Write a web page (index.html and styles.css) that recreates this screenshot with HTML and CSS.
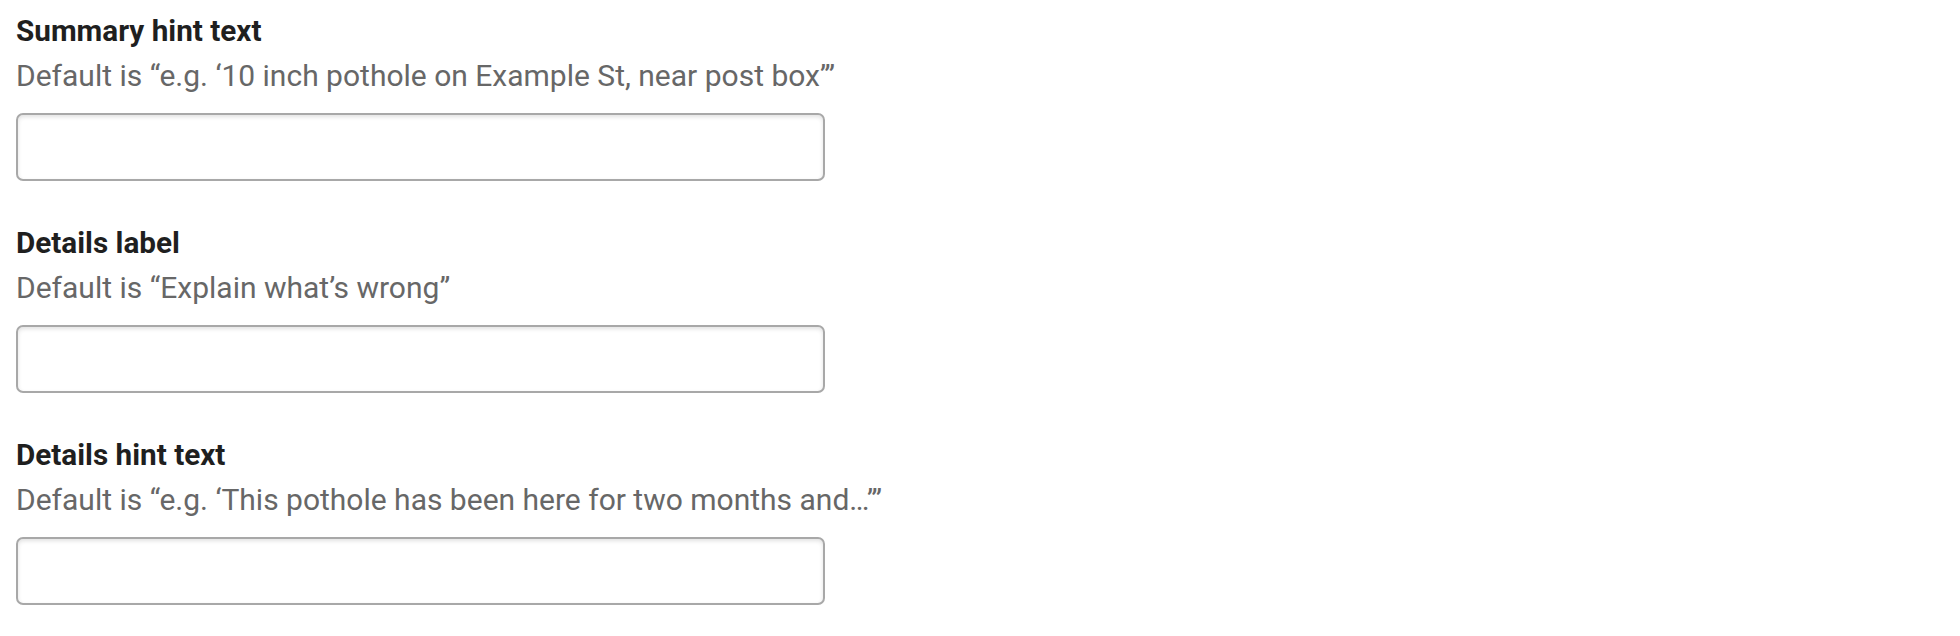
FILE: index.html
```html
<!DOCTYPE html>
<html lang="en">
<head>
<meta charset="utf-8">
<title>Form</title>
<link rel="stylesheet" href="styles.css">
</head>
<body>
<form class="form">
  <div class="field">
    <label class="label" for="f1">Summary hint text</label>
    <div class="hint">Default is “e.g. ‘10 inch pothole on Example St, near post box’”</div>
    <input class="input" id="f1" type="text">
  </div>
  <div class="field">
    <label class="label" for="f2">Details label</label>
    <div class="hint">Default is “Explain what’s wrong”</div>
    <input class="input" id="f2" type="text">
  </div>
  <div class="field">
    <label class="label" for="f3">Details hint text</label>
    <div class="hint">Default is “e.g. ‘This pothole has been here for two months and…’”</div>
    <input class="input" id="f3" type="text">
  </div>
</form>
</body>
</html>
```
FILE: styles.css
```css
html, body {
  margin: 0;
  padding: 0;
  background: #ffffff;
}
body {
  font-family: Roboto, "Liberation Sans", sans-serif;
}
.form {
  padding: 8px 16px 0;
  display: flex;
  flex-direction: column;
  gap: 39px;
}
.field {
  display: flex;
  flex-direction: column;
}
.label {
  font-size: 29.7px;
  line-height: 45px;
  font-weight: 700;
  color: #1f1f1f;
}
.hint {
  font-size: 30px;
  line-height: 45px;
  color: #676767;
}
.input {
  box-sizing: border-box;
  margin: 15px 0 0;
  width: 809px;
  height: 68px;
  border: 2px solid #a8a8a8;
  border-radius: 7px;
  box-shadow: inset 0 2px 4px rgba(0, 0, 0, 0.12);
  background: #ffffff;
  font: inherit;
  font-size: 30px;
  padding: 0 12px;
}
```
